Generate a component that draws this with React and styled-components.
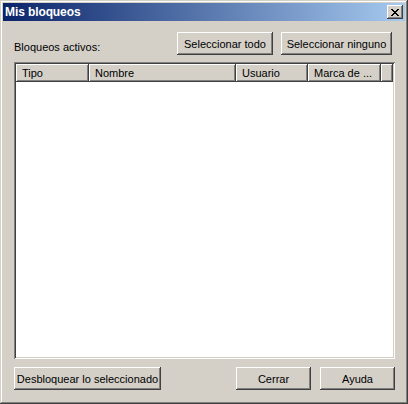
import React from 'react';
import styled, { createGlobalStyle } from 'styled-components';

const GlobalStyle = createGlobalStyle`
  html, body {
    margin: 0;
    padding: 0;
    background: #d4d0c8;
  }
  * {
    box-sizing: border-box;
  }
`;

const columnas = [
  { titulo: 'Tipo', ancho: 73 },
  { titulo: 'Nombre', ancho: 147 },
  { titulo: 'Usuario', ancho: 72 },
  { titulo: 'Marca de ...', ancho: 73 },
];

function CloseGlyph() {
  const filas = [
    '11....11',
    '.11..11.',
    '..1111..',
    '...11...',
    '..1111..',
    '.11..11.',
    '11....11',
  ];
  return (
    <svg width="8" height="7" viewBox="0 0 8 7" shapeRendering="crispEdges">
      {filas.map((fila, y) =>
        fila.split('').map((c, x) =>
          c === '1' ? <rect key={`${x}-${y}`} x={x} y={y} width="1" height="1" fill="#000" /> : null
        )
      )}
    </svg>
  );
}

export default function App() {
  return (
    <>
      <GlobalStyle />
      <Window>
        <TitleBar>
          <Title>Mis bloqueos</Title>
          <CloseButton type="button">
            <CloseGlyph />
          </CloseButton>
        </TitleBar>

        <Body>
          <TopRow>
            <Label>Bloqueos activos:</Label>
            <TopButtons>
              <Button $w={96}>Seleccionar todo</Button>
              <Button $w={111}>Seleccionar ninguno</Button>
            </TopButtons>
          </TopRow>

          <ListView>
            <HeaderRow>
              {columnas.map((col) => (
                <HeaderCell key={col.titulo} $w={col.ancho}>
                  {col.titulo}
                </HeaderCell>
              ))}
              <HeaderFiller />
            </HeaderRow>
            <ListBody />
          </ListView>

          <BottomRow>
            <Button $w={147}>Desbloquear lo seleccionado</Button>
            <RightButtons>
              <Button $w={75}>Cerrar</Button>
              <Button $w={75}>Ayuda</Button>
            </RightButtons>
          </BottomRow>
        </Body>
      </Window>
    </>
  );
}

const Window = styled.div`
  width: 408px;
  height: 404px;
  padding: 3px;
  display: flex;
  flex-direction: column;
  background: #d4d0c8;
  box-shadow: inset -1px -1px #404040, inset 1px 1px #d4d0c8,
    inset -2px -2px #808080, inset 2px 2px #ffffff;
  font-family: 'Liberation Sans', Arial, sans-serif;
  font-size: 11px;
  color: #000;
`;

const TitleBar = styled.div`
  height: 18px;
  display: flex;
  align-items: center;
  justify-content: space-between;
  padding: 0 2px 0 2px;
  background: linear-gradient(to right, #0a246a, #a6caf0);
`;

const Title = styled.span`
  color: #fff;
  font-weight: bold;
  font-size: 12px;
  letter-spacing: -0.1px;
`;

const CloseButton = styled.button`
  width: 16px;
  height: 14px;
  padding: 0;
  margin: 0;
  border: none;
  display: flex;
  align-items: center;
  justify-content: center;
  background: #d4d0c8;
  box-shadow: inset -1px -1px #404040, inset 1px 1px #ffffff,
    inset -2px -2px #808080;
`;

const Body = styled.div`
  flex: 1;
  display: flex;
  flex-direction: column;
  padding: 11px 10px 0 11px;
`;

const TopRow = styled.div`
  display: flex;
  align-items: flex-end;
  justify-content: space-between;
  height: 23px;
`;

const Label = styled.span`
  padding-bottom: 2px;
`;

const TopButtons = styled.div`
  display: flex;
  gap: 8px;
  margin-right: 3px;
`;

const Button = styled.button`
  width: ${(p) => p.$w}px;
  height: 23px;
  padding: 0;
  border: none;
  background: #d4d0c8;
  color: #000;
  font-family: 'Liberation Sans', Arial, sans-serif;
  font-size: 11px;
  white-space: nowrap;
  box-shadow: inset -1px -1px #404040, inset 1px 1px #ffffff,
    inset -2px -2px #808080;
`;

const ListView = styled.div`
  margin-top: 7px;
  height: 297px;
  padding: 2px;
  display: flex;
  flex-direction: column;
  background: #fff;
  box-shadow: inset 1px 1px #808080, inset -1px -1px #ffffff,
    inset 2px 2px #404040, inset -2px -2px #d4d0c8;
`;

const HeaderRow = styled.div`
  display: flex;
  height: 18px;
`;

const HeaderCell = styled.div`
  width: ${(p) => p.$w}px;
  flex: none;
  padding-left: 6px;
  display: flex;
  align-items: center;
  overflow: hidden;
  white-space: nowrap;
  background: #d4d0c8;
  box-shadow: inset -1px -1px #404040, inset 1px 1px #ffffff,
    inset -2px -2px #808080;
`;

const HeaderFiller = styled(HeaderCell)`
  flex: 1;
  width: auto;
`;

const ListBody = styled.div`
  flex: 1;
  background: #fff;
`;

const BottomRow = styled.div`
  margin-top: 8px;
  display: flex;
  justify-content: space-between;
`;

const RightButtons = styled.div`
  display: flex;
  gap: 9px;
`;
